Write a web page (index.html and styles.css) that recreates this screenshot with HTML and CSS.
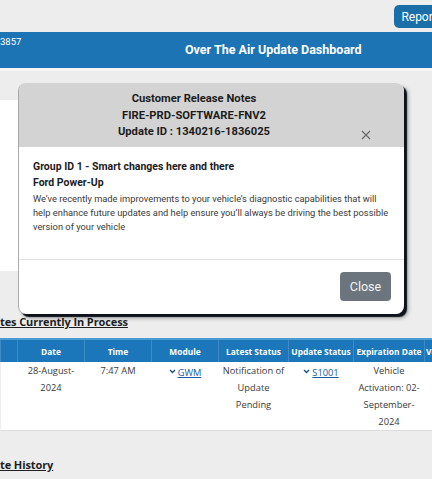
FILE: index.html
```html
<!DOCTYPE html>
<html>
<head>
<meta charset="utf-8">
<link rel="stylesheet" href="styles.css">
</head>
<body>
<div class="topbar"><button class="report">Report</button></div>
<div class="banner">
  <span class="vin">3857</span>
  <h1 class="title">Over The Air Update Dashboard</h1>
</div>
<div class="summary">
  <div class="card"></div>
</div>
<h2 class="section-title">tes Currently In Process</h2>
<div class="table-wrap">
<table class="grid">
  <thead>
    <tr>
      <th class="c0"></th>
      <th class="c1">Date</th>
      <th class="c2">Time</th>
      <th class="c3">Module</th>
      <th class="c4">Latest Status</th>
      <th class="c5">Update Status</th>
      <th class="c6">Expiration Date</th>
      <th class="c7">Veh</th>
    </tr>
  </thead>
  <tbody>
    <tr>
      <td></td>
      <td>28-August-<br>2024</td>
      <td>7:47 AM</td>
      <td><span class="chev"><svg width="7" height="5" viewBox="0 0 7 5"><path d="M1 1 L3.5 3.5 L6 1" fill="none" stroke="#1a4f8a" stroke-width="1.4"/></svg></span><a href="#">GWM</a></td>
      <td>Notification of<br>Update<br>Pending</td>
      <td><span class="chev"><svg width="7" height="5" viewBox="0 0 7 5"><path d="M1 1 L3.5 3.5 L6 1" fill="none" stroke="#1a4f8a" stroke-width="1.4"/></svg></span><a href="#">S1001</a></td>
      <td>Vehicle<br>Activation: 02-<br>September-<br>2024</td>
      <td></td>
    </tr>
  </tbody>
</table>
</div>
<h2 class="section-title history">te History</h2>

<div class="modal">
  <div class="modal-header">
    <div class="mh-title">
      <div>Customer Release Notes</div>
      <div>FIRE-PRD-SOFTWARE-FNV2</div>
      <div>Update ID : 1340216-1836025</div>
    </div>
    <span class="close-x"><svg width="10" height="10" viewBox="0 0 10 10"><path d="M1 1 L9 9 M9 1 L1 9" stroke="#6b6b6b" stroke-width="1.2"/></svg></span>
  </div>
  <div class="modal-body">
    <div class="group">Group ID 1 - Smart changes here and there</div>
    <div class="group">Ford Power-Up</div>
    <p class="desc">We’ve recently made improvements to your vehicle’s diagnostic capabilities that will help enhance future updates and help ensure you’ll always be driving the best possible version of your vehicle</p>
  </div>
  <div class="modal-footer"><button class="btn-close">Close</button></div>
</div>
</body>
</html>
```
FILE: styles.css
```css
html, body {
  margin: 0;
  padding: 0;
}
body {
  background: #ededed;
  width: 432px;
  height: 479px;
  overflow: hidden;
  position: relative;
  font-family: Roboto, "Liberation Sans", sans-serif;
}
.topbar {
  height: 32px;
  display: flex;
  justify-content: flex-end;
  align-items: flex-start;
  padding-top: 5px;
  box-sizing: border-box;
}
.report {
  background: #1a6fa8;
  color: #fff;
  border: 0;
  border-radius: 5px;
  height: 23px;
  padding: 0 7px;
  margin-right: -12px;
  font: 12px Roboto, sans-serif;
}
.banner {
  background: #1c74b4;
  height: 36px;
  position: relative;
  color: #fff;
}
.vin {
  position: absolute;
  left: 0;
  top: 4px;
  font-size: 9.5px;
}
.title {
  margin: 0;
  padding-left: 185px;
  line-height: 36px;
  font-size: 12.5px;
  font-weight: 700;
}
.summary {
  height: 200px;
  padding-top: 29px;
  box-sizing: border-box;
  border-top: 3px solid #f5f5f5;
}
.card {
  width: 120px;
  height: 171px;
  background: #fff;
}
.section-title {
  margin: 0;
  font-family: "Open Sans", sans-serif;
  font-size: 11px;
  font-weight: 700;
  color: #1f1f1f;
  text-decoration: underline;
  line-height: 14px;
  padding-top: 47px;
  letter-spacing: -0.1px;
}
.table-wrap {
  margin-top: 9px;
  width: 480px;
}
.grid {
  border-collapse: collapse;
  table-layout: fixed;
  width: 480px;
  font-family: "Open Sans", sans-serif;
}
.grid th {
  background: #1b77b9;
  color: #fff;
  font-size: 8.4px;
  font-weight: 700;
  height: 22px;
  padding: 0;
  border-top: 2px solid #4a9bd2;
  border-left: 1px solid #3f8bc6;
  text-align: center;
  white-space: nowrap;
}
.c0 { width: 16px; }
.c1 { width: 66px; }
.c2 { width: 66px; }
.c3 { width: 66px; }
.c4 { width: 69px; }
.c5 { width: 64px; }
.c6 { width: 70px; }
.c7 { width: 63px; text-align: left !important; padding-left: 1px !important; }
.grid td {
  background: #fff;
  font-size: 9.3px;
  color: #3a3a3a;
  line-height: 17px;
  text-align: center;
  vertical-align: top;
  padding: 0;
  height: 68px;
  border-bottom: 1px solid #dcdcdc;
}
.grid a {
  color: #1a5aa0;
  text-decoration: underline;
}
.chev {
  display: inline-block;
  margin-right: 2px;
  vertical-align: 2px;
}
.history {
  padding-top: 27px;
}

.modal {
  position: absolute;
  left: 18px;
  top: 83px;
  width: 385px;
  background: #fff;
  border-radius: 8px;
  border-left: 1px solid #a9a9a9;
  box-shadow: 3px 3px 1px #0d121b, 4px 4px 4px rgba(0,0,0,0.35);
  overflow: hidden;
}
.modal-header {
  background: #d3d3d3;
  height: 64px;
  position: relative;
  box-sizing: border-box;
  padding: 8px 35px 0 0;
  color: #1c1c1c;
}
.mh-title {
  text-align: center;
  font-size: 11.2px;
  font-weight: 700;
  line-height: 16.5px;
}
.close-x {
  position: absolute;
  left: 342px;
  top: 42px;
}
.modal-body {
  padding: 12px 14px 0;
  height: 100px;
  border-bottom: 1px solid #e3e3e3;
}
.group {
  font-size: 10.5px;
  font-weight: 700;
  color: #1c1c1c;
  line-height: 16px;
}
.desc {
  margin: 1px 0 0;
  font-size: 9.3px;
  color: #3a3a3a;
  line-height: 14px;
}
.modal-footer {
  height: 54px;
  display: flex;
  justify-content: flex-end;
  align-items: flex-start;
  padding: 12px 13px 0 0;
  box-sizing: border-box;
}
.btn-close {
  background: #6c757d;
  color: #f4f4f4;
  border: 0;
  border-radius: 4px;
  width: 51px;
  height: 29px;
  font: 12.5px Roboto, sans-serif;
}
```
